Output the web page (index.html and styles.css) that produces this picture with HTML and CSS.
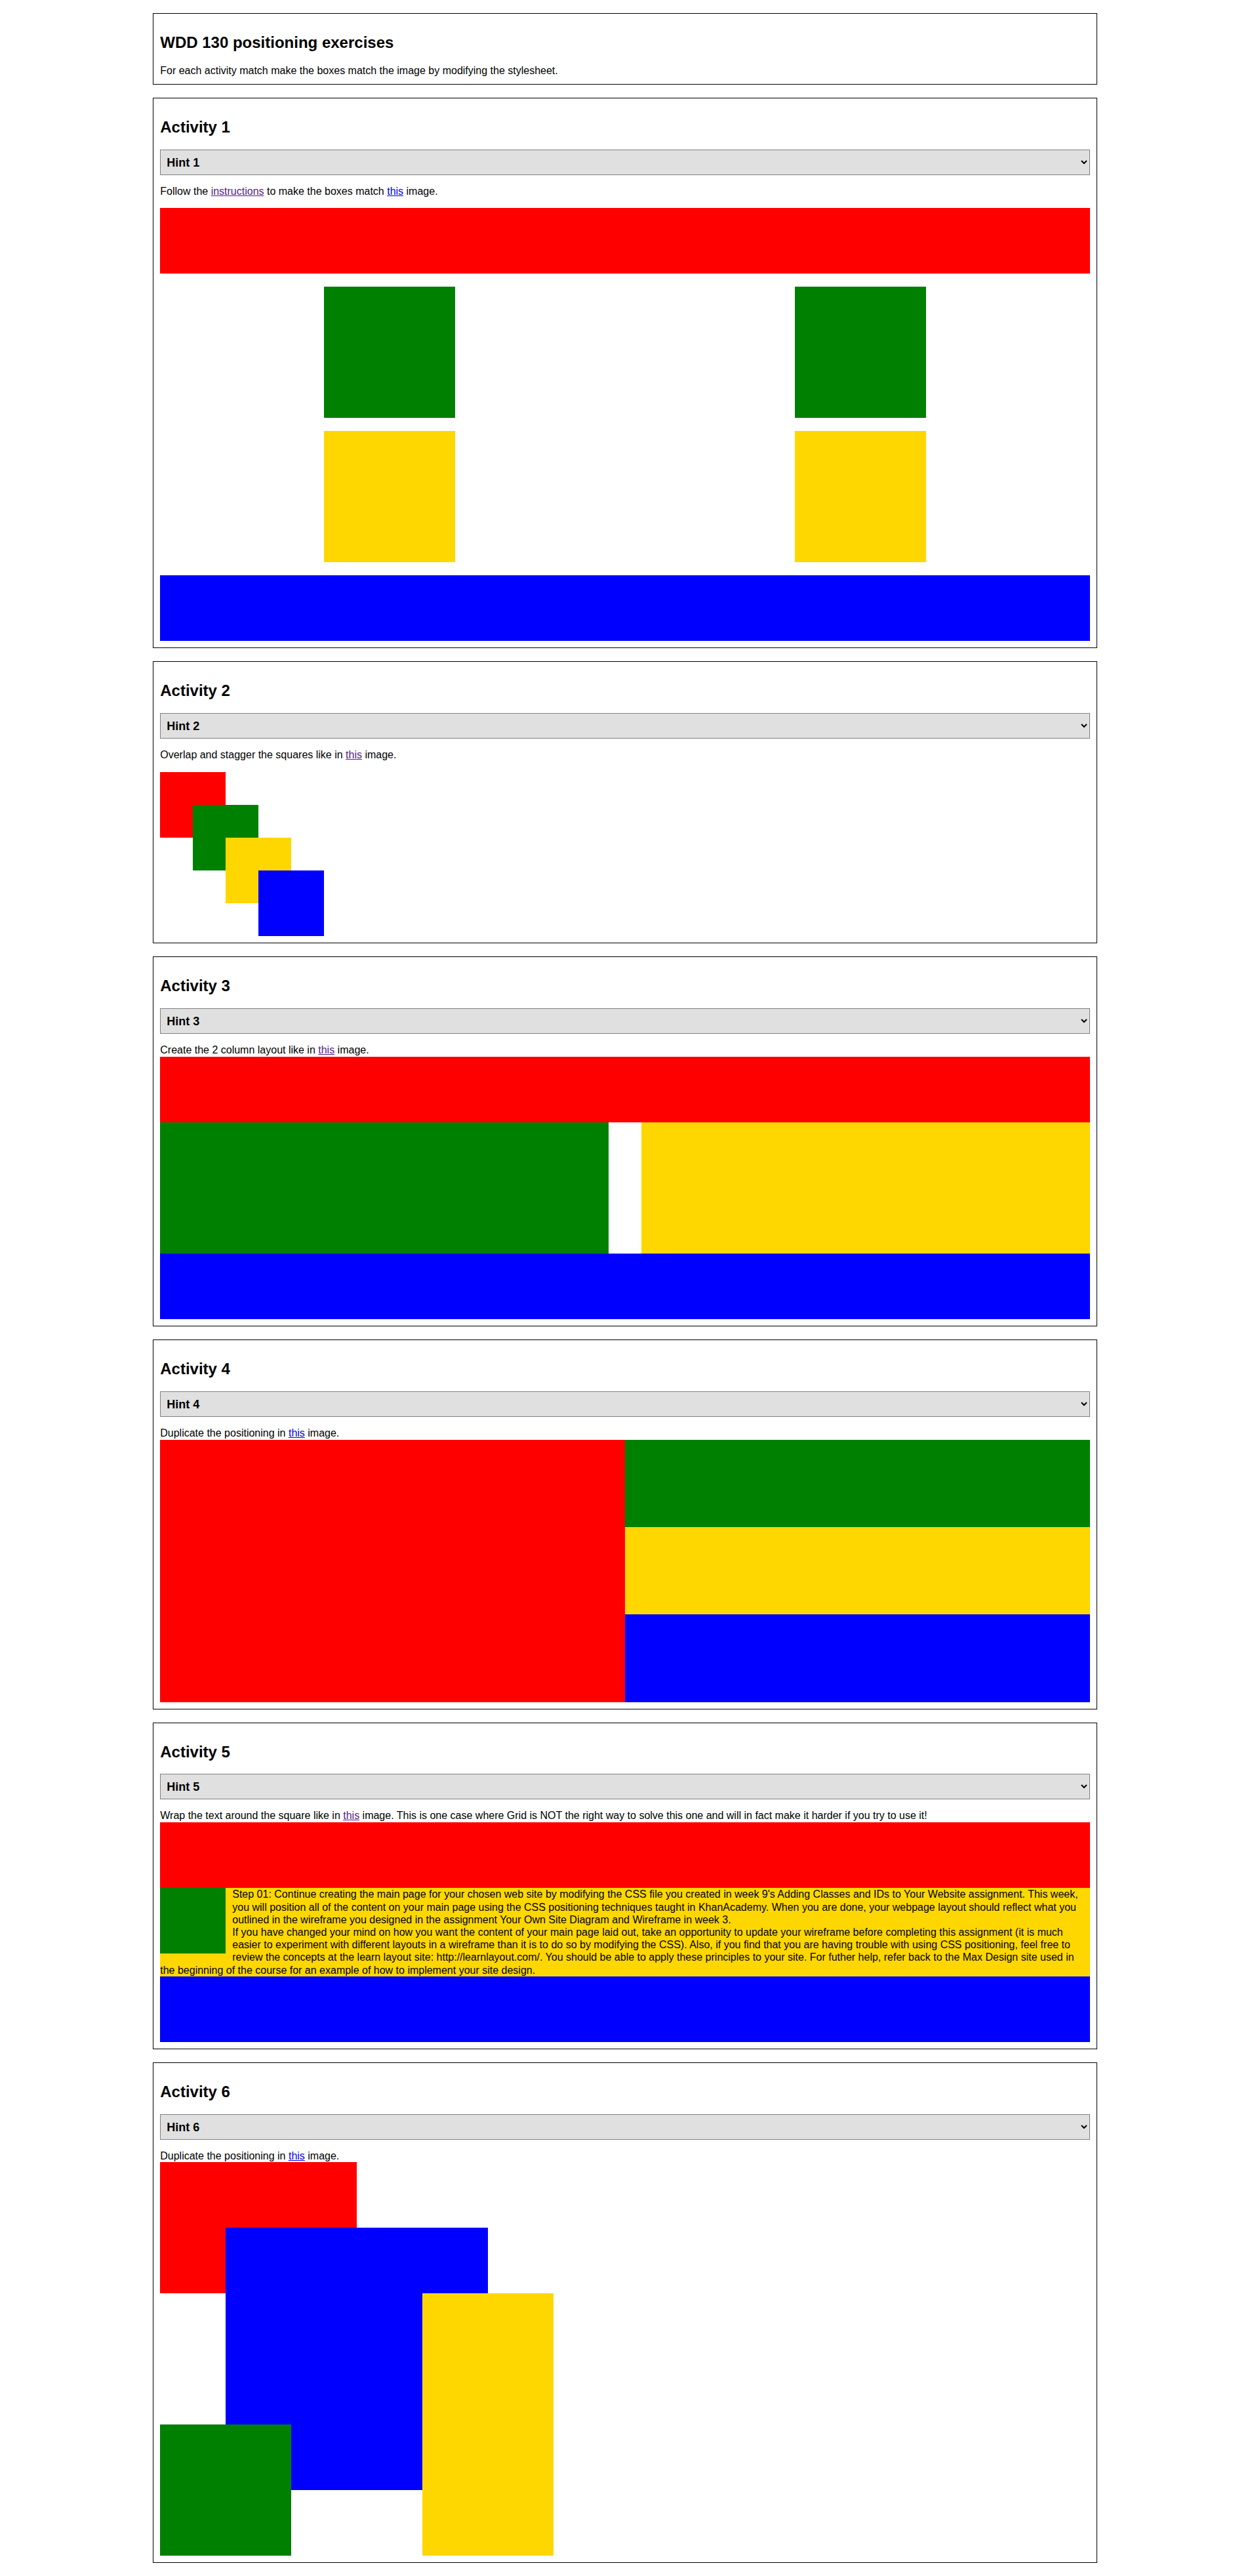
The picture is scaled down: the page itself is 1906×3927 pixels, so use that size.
FILE: index.html
```html
<!DOCTYPE html>
<html lang="en">
<head>
<meta charset="utf-8">
<title>WDD 130 positioning exercises</title>
<link rel="stylesheet" href="styles.css">
</head>
<body>
<section class="card">
  <h2>WDD 130 positioning exercises</h2>
  <p class="lead">For each activity match make the boxes match the image by modifying the stylesheet.</p>
</section>

<section class="card">
  <h2>Activity 1</h2>
  <select class="hint"><option>Hint 1</option></select>
  <p>Follow the <a href="#" class="visited">instructions</a> to make the boxes match <a href="#">this</a> image.</p>
  <div class="act1">
    <div class="wide red"></div>
    <div class="sq green"></div>
    <div class="sq green"></div>
    <div class="sq yellow"></div>
    <div class="sq yellow"></div>
    <div class="wide blue"></div>
  </div>
</section>

<section class="card">
  <h2>Activity 2</h2>
  <select class="hint"><option>Hint 2</option></select>
  <p>Overlap and stagger the squares like in <a href="#" class="visited">this</a> image.</p>
  <div class="act2">
    <div class="s1 red"></div>
    <div class="s2 green"></div>
    <div class="s3 yellow"></div>
    <div class="s4 blue"></div>
  </div>
</section>

<section class="card">
  <h2>Activity 3</h2>
  <select class="hint"><option>Hint 3</option></select>
  <p class="tight">Create the 2 column layout like in <a href="#" class="visited">this</a> image.</p>
  <div class="act3">
    <div class="span red"></div>
    <div class="col green"></div>
    <div class="col yellow"></div>
    <div class="span blue"></div>
  </div>
</section>

<section class="card">
  <h2>Activity 4</h2>
  <select class="hint"><option>Hint 4</option></select>
  <p class="tight">Duplicate the positioning in <a href="#">this</a> image.</p>
  <div class="act4">
    <div class="tall red"></div>
    <div class="green"></div>
    <div class="yellow"></div>
    <div class="blue"></div>
  </div>
</section>

<section class="card">
  <h2>Activity 5</h2>
  <select class="hint"><option>Hint 5</option></select>
  <p class="tight">Wrap the text around the square like in <a href="#" class="visited">this</a> image. This is one case where Grid is NOT the right way to solve this one and will in fact make it harder if you try to use it!</p>
  <div class="act5">
    <div class="band red"></div>
    <div class="wrap yellow">
      <div class="float green"></div>
      <p class="step">Step 01: Continue creating the main page for your chosen web site by modifying the CSS file you created in week 9's Adding Classes and IDs to Your Website assignment. This week, you will position all of the content on your main page using the CSS positioning techniques taught in KhanAcademy. When you are done, your webpage layout should reflect what you outlined in the wireframe you designed in the assignment Your Own Site Diagram and Wireframe in week 3.</p>
      <p class="step">If you have changed your mind on how you want the content of your main page laid out, take an opportunity to update your wireframe before completing this assignment (it is much easier to experiment with different layouts in a wireframe than it is to do so by modifying the CSS). Also, if you find that you are having trouble with using CSS positioning, feel free to review the concepts at the learn layout site: http://learnlayout.com/. You should be able to apply these principles to your site. For futher help, refer back to the Max Design site used in the beginning of the course for an example of how to implement your site design.</p>
    </div>
    <div class="band blue"></div>
  </div>
</section>

<section class="card">
  <h2>Activity 6</h2>
  <select class="hint"><option>Hint 6</option></select>
  <p class="tight">Duplicate the positioning in <a href="#">this</a> image.</p>
  <div class="act6">
    <div class="p-red red"></div>
    <div class="p-blue blue"></div>
    <div class="p-yellow yellow"></div>
    <div class="p-green green"></div>
  </div>
</section>
</body>
</html>
```

FILE: styles.css
```css
body {
  margin: 0 8px;
  font-family: "Liberation Sans", Arial, sans-serif;
  font-size: 16px;
  color: #000;
  background: #fff;
}

.card {
  width: 75%;
  margin: 20px auto;
  padding: 10px;
  border: 1px solid #000;
}

.card h2 {
  font-size: 24px;
  font-weight: bold;
  margin: 0.83em 0;
}

.card p {
  margin: 16px 0;
  line-height: 18.9px;
}

.card .lead {
  margin-bottom: 0;
}

.card .tight {
  margin-bottom: 0;
}

a {
  color: #0000ee;
  text-decoration: underline;
}

a.visited {
  color: #551a8b;
}

.hint {
  display: block;
  width: 100%;
  box-sizing: border-box;
  height: 39px;
  margin: 0;
  padding: 8px 5px;
  font-family: "Liberation Sans", Arial, sans-serif;
  font-size: 18px;
  font-weight: bold;
  color: #000;
  background-color: #e0e0e0;
  border: 1px solid #808080;
  border-radius: 0;
}

.red { background: #ff0000; }
.green { background: #008000; }
.yellow { background: #ffd700; }
.blue { background: #0000ff; }

/* Activity 1 */
.act1 {
  display: grid;
  grid-template-columns: 1fr 1fr;
  gap: 20px;
  justify-items: center;
}
.act1 .wide {
  grid-column: 1 / -1;
  justify-self: stretch;
  height: 100px;
}
.act1 .sq {
  width: 200px;
  height: 200px;
}

/* Activity 2 */
.act2 {
  display: grid;
  grid-template-columns: repeat(5, 50px);
  grid-template-rows: repeat(5, 50px);
}
.act2 .s1 { grid-column: 1 / 3; grid-row: 1 / 3; }
.act2 .s2 { grid-column: 2 / 4; grid-row: 2 / 4; }
.act2 .s3 { grid-column: 3 / 5; grid-row: 3 / 5; }
.act2 .s4 { grid-column: 4 / 6; grid-row: 4 / 6; }

/* Activity 3 */
.act3 {
  display: grid;
  grid-template-columns: 1fr 1fr;
  column-gap: 50px;
}
.act3 .span {
  grid-column: 1 / -1;
  height: 100px;
}
.act3 .col {
  height: 200px;
}

/* Activity 4 */
.act4 {
  display: grid;
  grid-template-columns: 1fr 1fr;
  grid-template-rows: repeat(3, 1fr);
  height: 400px;
}
.act4 .tall {
  grid-row: 1 / 4;
}

/* Activity 5 */
.act5 .band {
  height: 100px;
}
.act5 .wrap {
  display: flow-root;
}
.act5 .float {
  float: left;
  width: 100px;
  height: 100px;
  margin-right: 10px;
}
.act5 .step {
  margin: 0;
  line-height: 19.2px;
}

/* Activity 6 */
.act6 {
  display: grid;
  grid-template-columns: repeat(6, 100px);
  grid-template-rows: repeat(6, 100px);
}
.act6 .p-red { grid-column: 1 / 4; grid-row: 1 / 3; }
.act6 .p-blue { grid-column: 2 / 6; grid-row: 2 / 6; }
.act6 .p-yellow { grid-column: 5 / 7; grid-row: 3 / 7; }
.act6 .p-green { grid-column: 1 / 3; grid-row: 5 / 7; }
```
